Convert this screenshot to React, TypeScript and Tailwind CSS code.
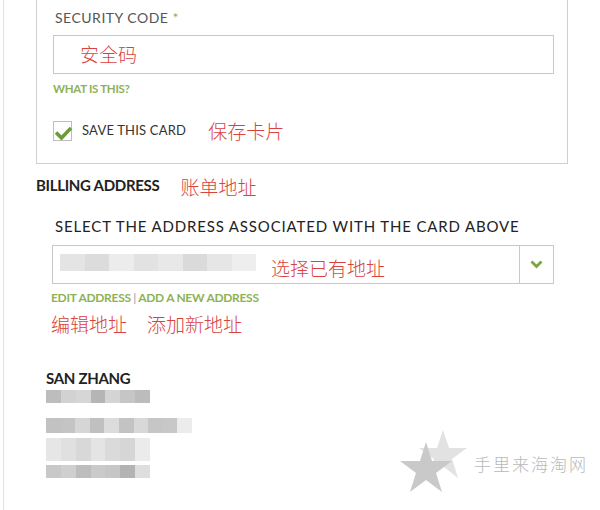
import React from "react";

const cjk = { fontFamily: '"Noto Sans CJK SC", sans-serif' };

function Blur({ w, h, shades }: { w: number; h: number; shades: string[] }) {
  return (
    <div className="flex" style={{ width: w, height: h }}>
      {shades.map((c, i) => (
        <div key={i} className="flex-1" style={{ background: c }} />
      ))}
    </div>
  );
}

export default function App() {
  return (
    <div
      className="relative w-[600px] h-[510px] overflow-hidden bg-white"
      style={{ fontFamily: 'Lato, "Noto Sans CJK SC", sans-serif' }}
    >
      <div className="ml-[3px] h-full border-l border-[#e2e2e2] pl-[32px]">
        {/* Card */}
        <div className="w-[532px] border-x border-b border-[#cfcfcf] px-4 pt-[10px] pb-[22px]">
          <div className="text-[14px] leading-4 text-[#555] tracking-[0.5px] pl-[2px]">
            SECURITY CODE <span className="text-[#8db255]">*</span>
          </div>
          <div className="mt-[9px] h-[39px] w-[501px] border border-[#c8c8c8] flex items-center pl-[26px]">
            <span className="text-[19px] text-[#d9433e] font-light" style={cjk}>
              安全码
            </span>
          </div>
          <div className="mt-[9px] text-[11.5px] leading-3 font-bold text-[#8db255] tracking-[-0.3px]">
            WHAT IS THIS?
          </div>
          <div className="mt-[26px] flex items-center h-5">
            <div className="relative w-[19px] h-[20px] border border-[#bdbdbd] bg-white">
              <svg
                className="absolute left-[1px] top-[3px]"
                width="17"
                height="15"
                viewBox="0 0 17 15"
              >
                <path d="M1 7.5 L6.5 13 L16 3" fill="none" stroke="#6b9b3a" strokeWidth="3.6" strokeLinejoin="miter" />
              </svg>
            </div>
            <span className="ml-[10px] text-[13px] text-[#333] tracking-[0.2px]">SAVE THIS CARD</span>
            <span className="ml-[22px] text-[19px] text-[#d9433e] font-light" style={cjk}>
              保存卡片
            </span>
          </div>
        </div>

        {/* Billing */}
        <div className="mt-[10px] flex items-center h-[22px]">
          <span className="text-[15px] font-bold text-[#222] tracking-[-0.3px]">BILLING ADDRESS</span>
          <span className="ml-[21px] mt-[4px] text-[19px] text-[#d9433e] font-light" style={cjk}>
            账单地址
          </span>
        </div>

        <div className="pl-4 w-[518px]">
          <div className="mt-[21px] pl-[3px] text-[15px] leading-[18px] text-[#222] tracking-[0.85px] whitespace-nowrap">
            SELECT THE ADDRESS ASSOCIATED WITH THE CARD ABOVE
          </div>
          <div className="mt-[10px] h-[39px] w-[502px] border border-[#c8c8c8] flex">
            <div className="flex-1 flex items-center pl-[7px]">
              <div className="mt-[-4px]">
                <Blur
                  w={196}
                  h={17}
                  shades={["#e4e4e4", "#dcdcdc", "#ececec", "#e2e2e2", "#e8e8e8", "#dadada", "#e6e6e6", "#eeeeee"]}
                />
              </div>
              <span className="ml-[15px] mt-[8px] text-[19px] text-[#d9433e] font-light" style={cjk}>
                选择已有地址
              </span>
            </div>
            <div className="w-[34px] border-l border-[#c8c8c8] flex items-center justify-center">
              <svg width="13" height="9" viewBox="0 0 13 9">
                <path d="M1.5 1.5 L6.5 6.5 L11.5 1.5" fill="none" stroke="#7aa73f" strokeWidth="2.8" />
              </svg>
            </div>
          </div>
          <div className="mt-[8px] text-[12px] leading-3 font-bold text-[#8db255] tracking-[-0.3px] -ml-[1px] whitespace-nowrap">
            EDIT ADDRESS <span className="text-[#999] font-normal">|</span> ADD A NEW ADDRESS
          </div>
          <div className="mt-[6px] flex text-[19px] text-[#d9433e] font-light -ml-[1px]" style={cjk}>
            <span>编辑地址</span>
            <span className="ml-[20px]">添加新地址</span>
          </div>
        </div>

        <div className="pl-[10px]">
          <div className="mt-[30px] text-[15px] leading-[18px] font-bold text-[#222] tracking-[-0.3px]">SAN ZHANG</div>
          <div className="mt-[3px]">
            <Blur w={104} h={13} shades={["#bdbdbd", "#d2d2d2", "#d6d6d6", "#b5b5b5", "#d4d4d4", "#c6c6c6", "#bcbcbc"]} />
          </div>
          <div className="mt-[15px]">
            <Blur
              w={146}
              h={15}
              shades={["#c2c2c2", "#c4c4c4", "#d6d6d6", "#c0c0c0", "#dcdcdc", "#c3c3c3", "#d8d8d8", "#c6c6c6", "#c8c8c8", "#ececec"]}
            />
          </div>
          <div className="mt-[5px]">
            <Blur w={104} h={23} shades={["#e6e6e6", "#e0e0e0", "#d8d8d8", "#e4e4e4", "#dadada", "#d6d6d6", "#ebebeb"]} />
          </div>
          <div className="mt-[4px]">
            <Blur w={104} h={13} shades={["#c8c8c8", "#cfcfcf", "#bdbdbd", "#cacaca", "#c6c6c6", "#b3b3b3", "#dedede"]} />
          </div>
        </div>
      </div>

      {/* Watermark */}
      <div className="absolute left-[396px] top-[428px] flex items-center">
        <svg width="72" height="68" viewBox="0 0 72 68">
          <polygon
            points="47,2 53,20 71,20 56,31 62,50 47,38 32,50 38,31 23,20 41,20"
            fill="#e2e2e2"
          />
          <polygon
            points="30,14 36,33 56,33 40,45 46,64 30,52 14,64 20,45 4,33 24,33"
            fill="#c9c9c9"
          />
        </svg>
        <span className="ml-[6px] mt-[4px] text-[17px] tracking-[2px] text-[#b8b8b8] font-light" style={{ fontFamily: '"Noto Sans CJK SC", serif' }}>
          手里来海淘网
        </span>
      </div>
    </div>
  );
}
